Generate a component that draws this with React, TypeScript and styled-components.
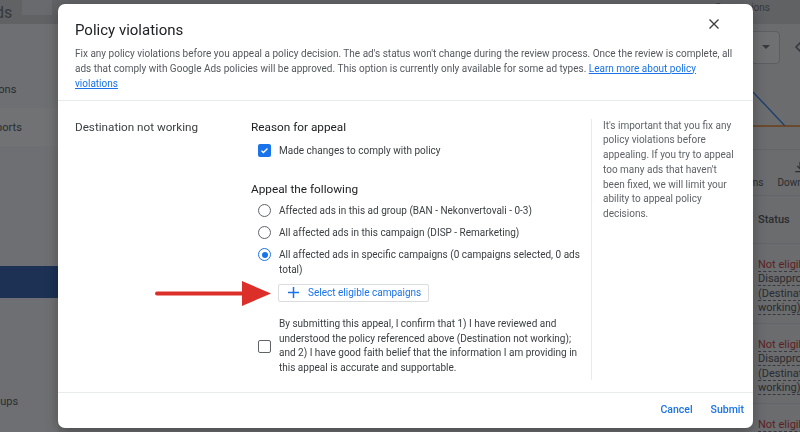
import React from "react";
import styled, { createGlobalStyle } from "styled-components";

const GlobalStyle = createGlobalStyle`
  html, body {
    margin: 0;
    padding: 0;
    width: 800px;
    height: 432px;
    overflow: hidden;
  }
  body {
    font-family: Roboto, "Liberation Sans", Arial, sans-serif;
    color: #202124;
  }
  * { box-sizing: border-box; }
`;

/* ---------- the Google Ads page that sits behind the dialog ---------- */

const Viewport = styled.div`
  width: 800px;
  height: 432px;
  overflow: hidden;
`;

const Page = styled.div`
  display: grid;
  grid-template-columns: 158px 802px;
  width: 960px;
  height: 432px;
  margin-left: -100px;
  font-size: 11px;
  color: #3c4043;
`;

const Sidebar = styled.nav`
  display: flex;
  flex-direction: column;
  background: #f4f5f6;
`;

const SideHeader = styled.div`
  display: flex;
  align-items: center;
  gap: 10px;
  height: 24px;
  padding-left: 30px;
  background: #cfd0d2;
`;

const Logo = styled.span`
  font-size: 16px;
  color: #5f6368;
  white-space: nowrap;
`;

const SearchStub = styled.span`
  width: 30px;
  height: 15px;
  align-self: flex-start;
  background: #e6e7e9;
`;

const NavItem = styled.div<{ indent: number; tint?: boolean }>`
  display: flex;
  align-items: center;
  height: 38px;
  padding-left: ${({ indent }) => indent}px;
  font-size: 11px;
  white-space: nowrap;
  background: ${({ tint }) => (tint ? "#fafbfb" : "transparent")};
`;

const NavActive = styled.div`
  height: 32px;
  background: #174ea6;
`;

const Spacer = styled.div<{ h: number }>`
  height: ${({ h }) => h}px;
`;

const Main = styled.main`
  display: flex;
  flex-direction: column;
  background: #e9ebed;
`;

const MainHeader = styled.div`
  display: flex;
  justify-content: flex-end;
  align-items: flex-start;
  height: 24px;
  padding: 2px 90px 0 0;
  background: #cfd0d2;
  font-size: 10px;
  color: #5f6368;
`;

const Toolbar = styled.div`
  display: flex;
  justify-content: flex-end;
  align-items: center;
  gap: 8px;
  height: 46px;
  padding-right: 24px;
`;

const DateSelect = styled.div`
  display: flex;
  justify-content: flex-end;
  align-items: center;
  width: 120px;
  height: 33px;
  padding-right: 9px;
  border: 1px solid #c4c6c9;
  border-radius: 4px;
  background: #f6f6f6;
`;

const Caret = styled.span`
  width: 0;
  height: 0;
  border-left: 4px solid transparent;
  border-right: 4px solid transparent;
  border-top: 4px solid #5f6368;
`;

const Chevron = styled.span`
  display: flex;
  align-items: center;
  justify-content: center;
  width: 20px;
`;

const Chart = styled.div`
  height: 80px;
  border-bottom: 1px solid #d6d8db;
  svg { display: block; }
`;

const ActionBar = styled.div`
  display: flex;
  justify-content: flex-end;
  gap: 14px;
  height: 46px;
  padding: 10px 38px 0 0;
  border-bottom: 1px solid #d6d8db;
`;

const ToolButton = styled.div`
  display: flex;
  flex-direction: column;
  align-items: center;
  gap: 3px;
  font-size: 10px;
  color: #3c4043;
`;

const TableHead = styled.div`
  display: grid;
  grid-template-columns: 1fr 110px;
  align-items: center;
  height: 48px;
  border-bottom: 1px solid #d6d8db;
  font-weight: 500;
`;

const TableRow = styled.div`
  display: grid;
  grid-template-columns: 1fr 110px;
  height: 80px;
  padding-top: 14px;
  border-bottom: 1px solid #d6d8db;
  line-height: 14.3px;
`;

const StatusCell = styled.div`
  padding-left: 8px;
  padding-right: 20px;
`;

const Dashed = styled.span<{ alert?: boolean }>`
  color: ${({ alert }) => (alert ? "#c5221f" : "#3c4043")};
  text-decoration: underline dashed #5f6368;
  text-underline-offset: 3px;
`;

const Scrim = styled.div`
  position: fixed;
  inset: 0;
  background: rgba(32, 33, 36, 0.63);
`;

/* ---------- the dialog ---------- */

const Dialog = styled.section`
  position: fixed;
  top: 4px;
  left: 58px;
  width: 695px;
  height: 424px;
  display: flex;
  flex-direction: column;
  background: #fff;
  border-radius: 7px;
  box-shadow: 0 4px 14px rgba(0, 0, 0, 0.3);
`;

const Header = styled.header`
  padding: 14px 17px 9px 17px;
  border-bottom: 1px solid #e8eaed;
`;

const TitleRow = styled.div`
  display: flex;
  justify-content: space-between;
  align-items: center;
  height: 24px;
`;

const Title = styled.h1`
  margin: 0;
  font-size: 15px;
  font-weight: 400;
  color: #202124;
`;

const CloseButton = styled.button`
  display: flex;
  align-items: center;
  justify-content: center;
  align-self: flex-start;
  width: 24px;
  height: 24px;
  margin: -6px 10px 0 0;
  padding: 0;
  border: 0;
  background: none;
`;

const Description = styled.p`
  margin: 3.5px 0 0;
  font-size: 10px;
  line-height: 15px;
  color: #55595e;
`;

const Link = styled.a`
  color: #1a73e8;
  text-decoration: underline;
`;

const Body = styled.div`
  flex: 1;
  display: grid;
  grid-template-columns: 176px 341px 1fr;
  padding: 18px 17px 12px 17px;
`;

const RuleLabel = styled.div`
  font-size: 11.7px;
  line-height: 16px;
  color: #3c4043;
`;

const Form = styled.div`
  padding-right: 9px;
  border-right: 1px solid #e8eaed;
`;

const SectionTitle = styled.div<{ gap: number }>`
  margin-top: ${({ gap }) => gap}px;
  font-size: 11.8px;
  line-height: 16px;
  color: #202124;
`;

const OptionRow = styled.label<{ gap: number }>`
  display: flex;
  align-items: flex-start;
  gap: 8px;
  margin-top: ${({ gap }) => gap}px;
  padding-left: 7px;
  font-size: 10px;
  line-height: 15px;
  color: #3c4043;
`;

const ConsentRow = styled(OptionRow)`
  align-items: center;
  line-height: 14.6px;
`;

const Box = styled.span<{ checked?: boolean }>`
  flex: none;
  display: flex;
  align-items: center;
  justify-content: center;
  width: 13px;
  height: 13px;
  margin-top: 1px;
  border-radius: 2px;
  border: ${({ checked }) => (checked ? "none" : "1.6px solid #5f6368")};
  background: ${({ checked }) => (checked ? "#1a73e8" : "#fff")};
`;

const Radio = styled.span<{ checked?: boolean }>`
  flex: none;
  display: flex;
  align-items: center;
  justify-content: center;
  width: 13px;
  height: 13px;
  margin-top: 1px;
  border-radius: 50%;
  border: 1.6px solid ${({ checked }) => (checked ? "#1a73e8" : "#5f6368")};

  &::after {
    content: "";
    display: ${({ checked }) => (checked ? "block" : "none")};
    width: 6px;
    height: 6px;
    border-radius: 50%;
    background: #1a73e8;
  }
`;

const SelectButton = styled.button`
  display: flex;
  align-items: center;
  gap: 9px;
  height: 18px;
  margin: 6.5px 0 0 27px;
  padding: 0 7px 0 9px;
  border: 1px solid #dadce0;
  border-radius: 2px;
  background: #fff;
  font-family: inherit;
  font-size: 10px;
  color: #1a73e8;
`;

const Note = styled.aside`
  padding-left: 11px;
  font-size: 10px;
  line-height: 14.8px;
  color: #5f6368;
`;

const Footer = styled.footer`
  display: flex;
  justify-content: flex-end;
  align-items: center;
  height: 36px;
  padding-bottom: 2px;
  border-top: 1px solid #e8eaed;
`;

const TextButton = styled.button`
  padding: 4px 9px;
  border: 0;
  background: none;
  font-family: inherit;
  font-size: 10.5px;
  font-weight: 500;
  color: #1a73e8;
`;

const Arrow = styled.svg`
  position: absolute;
  left: 97px;
  top: 277px;
`;

const Check = () => (
  <svg width="9" height="9" viewBox="0 0 24 24">
    <path d="M4 12.5l5 5L20 6.5" fill="none" stroke="#fff" strokeWidth="3.4" />
  </svg>
);

const App = () => (
  <>
    <GlobalStyle />
    <Viewport>
      <Page>
        <Sidebar>
          <SideHeader>
            <Logo>Google Ads</Logo>
            <SearchStub />
          </SideHeader>
          <Spacer h={46} />
          <NavItem indent={24}>Recommendations</NavItem>
          <NavItem indent={24} tint>Insights and reports</NavItem>
          <Spacer h={120} />
          <NavActive />
          <Spacer h={84} />
          <NavItem indent={68}>Ad groups</NavItem>
        </Sidebar>

        <Main>
          <MainHeader>Conversions</MainHeader>
          <Toolbar>
            <DateSelect>
              <Caret />
            </DateSelect>
            <Chevron>
              <svg width="8" height="12" viewBox="0 0 8 12">
                <path d="M7 1L2 6l5 5" fill="none" stroke="#5f6368" strokeWidth="1.6" />
              </svg>
            </Chevron>
            <Chevron>
              <svg width="8" height="12" viewBox="0 0 8 12">
                <path d="M1 1l5 5-5 5" fill="none" stroke="#5f6368" strokeWidth="1.6" />
              </svg>
            </Chevron>
          </Toolbar>
          <Chart>
            <svg width="802" height="80" viewBox="0 0 802 80">
              <polyline points="560,2 695,22 727,56" fill="none" stroke="#1a73e8" strokeWidth="1.3" />
              <line x1="0" y1="56" x2="802" y2="56" stroke="#e8710a" strokeWidth="1.3" />
            </svg>
          </Chart>
          <ActionBar>
            <ToolButton>
              <svg width="14" height="14" viewBox="0 0 24 24">
                <path d="M3 6h18M3 12h18M3 18h18" stroke="#5f6368" strokeWidth="2" />
              </svg>
              Columns
            </ToolButton>
            <ToolButton>
              <svg width="14" height="14" viewBox="0 0 24 24">
                <path d="M12 3v11M7 10l5 5 5-5M4 20h16" fill="none" stroke="#3c4043" strokeWidth="2" />
              </svg>
              Download
            </ToolButton>
          </ActionBar>
          <TableHead>
            <span />
            <StatusCell>Status</StatusCell>
          </TableHead>
          {[0, 1, 2].map((i) => (
            <TableRow key={i}>
              <span />
              <StatusCell>
                <Dashed alert>Not eligible</Dashed>
                <br />
                <Dashed>Disapproved (Destination not working)</Dashed>
              </StatusCell>
            </TableRow>
          ))}
        </Main>
      </Page>
    </Viewport>

    <Scrim />

    <Dialog role="dialog" aria-label="Policy violations">
      <Header>
        <TitleRow>
          <Title>Policy violations</Title>
          <CloseButton aria-label="Close">
            <svg width="10" height="10" viewBox="0 0 10 10">
              <path d="M0.5 0.5l9 9M9.5 0.5l-9 9" stroke="#3c4043" strokeWidth="1.4" />
            </svg>
          </CloseButton>
        </TitleRow>
        <Description>
          Fix any policy violations before you appeal a policy decision. The ad's status won't change
          during the review process. Once the review is complete, all ads that comply with Google Ads
          policies will be approved. This option is currently only available for some ad types.{" "}
          <Link>Learn more about policy violations</Link>
        </Description>
      </Header>

      <Body>
        <RuleLabel>Destination not working</RuleLabel>

        <Form>
          <SectionTitle gap={0}>Reason for appeal</SectionTitle>
          <OptionRow gap={8}>
            <Box checked>
              <Check />
            </Box>
            Made changes to comply with policy
          </OptionRow>

          <SectionTitle gap={23}>Appeal the following</SectionTitle>
          <OptionRow gap={6.5}>
            <Radio />
            Affected ads in this ad group (BAN - Nekonvertovali - 0-3)
          </OptionRow>
          <OptionRow gap={7}>
            <Radio />
            All affected ads in this campaign (DISP - Remarketing)
          </OptionRow>
          <OptionRow gap={7}>
            <Radio checked />
            All affected ads in specific campaigns (0 campaigns selected, 0 ads total)
          </OptionRow>

          <SelectButton>
            <svg width="11" height="11" viewBox="0 0 11 11">
              <path d="M5.5 0v11M0 5.5h11" stroke="#1a73e8" strokeWidth="1.5" />
            </svg>
            Select eligible campaigns
          </SelectButton>

          <ConsentRow gap={15.5}>
            <Box />
            By submitting this appeal, I confirm that 1) I have reviewed and understood the policy
            referenced above (Destination not working); and 2) I have good faith belief that the
            information I am providing in this appeal is accurate and supportable.
          </ConsentRow>
        </Form>

        <Note>
          It's important that you fix any policy violations before appealing. If you try to appeal too
          many ads that haven't been fixed, we will limit your ability to appeal policy decisions.
        </Note>
      </Body>

      <Footer>
        <TextButton>Cancel</TextButton>
        <TextButton>Submit</TextButton>
      </Footer>

      <Arrow width="116" height="25" viewBox="0 0 116 25">
        <path d="M2 10.5h88v4H2a2 2 0 0 1 0-4z" fill="#dc2f2a" />
        <polygon points="87,0 116,12.5 87,25" fill="#dc2f2a" />
      </Arrow>
    </Dialog>
  </>
);

export default App;
